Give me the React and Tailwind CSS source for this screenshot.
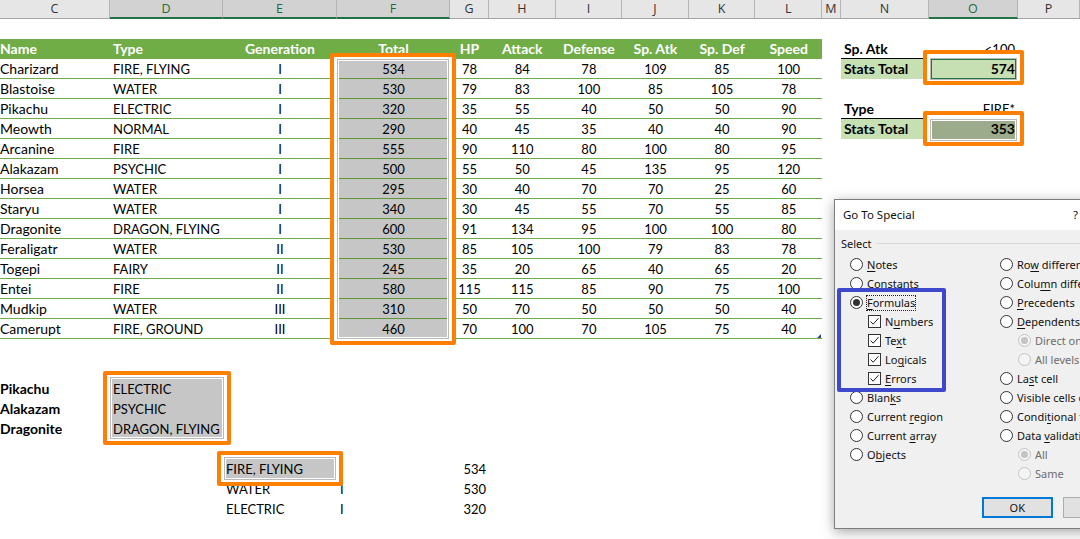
const grid = "grid grid-cols-[110px_113px_114px_113px_39px_repeat(5,66.6px)] whitespace-nowrap";

const pokemon = [
  ["Charizard", "FIRE, FLYING", "I", 534, 78, 84, 78, 109, 85, 100],
  ["Blastoise", "WATER", "I", 530, 79, 83, 100, 85, 105, 78],
  ["Pikachu", "ELECTRIC", "I", 320, 35, 55, 40, 50, 50, 90],
  ["Meowth", "NORMAL", "I", 290, 40, 45, 35, 40, 40, 90],
  ["Arcanine", "FIRE", "I", 555, 90, 110, 80, 100, 80, 95],
  ["Alakazam", "PSYCHIC", "I", 500, 55, 50, 45, 135, 95, 120],
  ["Horsea", "WATER", "I", 295, 30, 40, 70, 70, 25, 60],
  ["Staryu", "WATER", "I", 340, 30, 45, 55, 70, 55, 85],
  ["Dragonite", "DRAGON, FLYING", "I", 600, 91, 134, 95, 100, 100, 80],
  ["Feraligatr", "WATER", "II", 530, 85, 105, 100, 79, 83, 78],
  ["Togepi", "FAIRY", "II", 245, 35, 20, 65, 40, 65, 20],
  ["Entei", "FIRE", "II", 580, 115, 115, 85, 90, 75, 100],
  ["Mudkip", "WATER", "III", 310, 50, 70, 50, 50, 50, 40],
  ["Camerupt", "FIRE, GROUND", "III", 460, 70, 100, 70, 105, 75, 40],
];

const columns = [
  ["C", "w-[110px]"],
  ["D", "w-[113px]", true],
  ["E", "w-[114px]", true],
  ["F", "w-[113px]", true],
  ["G", "w-[39px]"],
  ["H", "w-[66.6px]"],
  ["I", "w-[66.6px]"],
  ["J", "w-[66.6px]"],
  ["K", "w-[66.6px]"],
  ["L", "w-[66.6px]"],
  ["M", "w-[19px]"],
  ["N", "w-[88px]"],
  ["O", "w-[89px]", true],
  ["P", "w-[62px]"],
];

const Callout = ({ className, pad = "border-x-[3px] border-y-[2px]", inner = "border-white" }) => (
  <div className={`absolute border-4 border-[#ff8000] rounded-[2px] ${className}`}>
    <div className={`h-full border-white ${pad}`}>
      <div className="h-full border border-[#b9b9b9]">
        <div className={`h-full border ${inner}`}></div>
      </div>
    </div>
  </div>
);

const Radio = ({ label, checked, disabled, focus, indent }) => (
  <div className={`flex items-center h-[19px] gap-1 whitespace-nowrap ${indent ? "pl-[18px]" : ""} ${disabled ? "text-[#6d6d6d]" : "text-[#111]"}`}>
    <span className={`flex items-center justify-center w-[13px] h-[13px] rounded-full border shrink-0 ${disabled ? "border-[#c4c4c4] bg-[#f4f4f4]" : "border-[#333] bg-white"}`}>
      {checked && <span className={`w-[7px] h-[7px] rounded-full ${disabled ? "bg-[#c4c4c4]" : "bg-[#333]"}`}></span>}
    </span>
    <span className={focus ? "outline-1 outline-dotted outline-[#222] leading-[14px]" : ""}>{label}</span>
  </div>
);

const Check = ({ label }) => (
  <div className="flex items-center h-[19px] gap-1 pl-[18px] text-[#111] whitespace-nowrap">
    <span className="flex items-center justify-center w-[13px] h-[13px] border border-[#333] bg-white shrink-0">
      <svg viewBox="0 0 11 11" className="w-[11px] h-[11px]">
        <path d="M1.5 5.5 L4.2 8.2 L9.5 2.2" fill="none" stroke="#222" strokeWidth="1" />
      </svg>
    </span>
    <span>{label}</span>
  </div>
);

const Key = ({ children }) => <span className="underline underline-offset-2">{children}</span>;

const GoToSpecial = () => (
  <div className="absolute left-[834px] top-[199px] w-[300px] h-[330px] border border-[#7d7d7d] bg-[#f0f0f0] shadow-[0_3px_12px_rgba(0,0,0,0.35)] font-['Noto_Sans',sans-serif] text-[11px] leading-[19px]">
    <div className="flex items-center justify-between h-[30px] bg-white pl-2 pr-[55px] pb-px text-[11.5px] text-[#111]">
      <span>Go To Special</span>
      <span>?</span>
    </div>
    <div className="flex items-center gap-1 h-[26px] pl-[6px] text-[#111]">
      <span>Select</span>
      <span className="flex-1 border-t border-[#d8d8d8]"></span>
    </div>
    <div className="flex pl-[15px] mt-[-1px]">
      <div className="w-[150px]">
        <Radio label={<><Key>N</Key>otes</>} />
        <Radio label={<>C<Key>o</Key>nstants</>} />
        <Radio checked focus label={<><Key>F</Key>ormulas</>} />
        <Check label={<>N<Key>u</Key>mbers</>} />
        <Check label={<>Te<Key>x</Key>t</>} />
        <Check label={<>Lo<Key>g</Key>icals</>} />
        <Check label={<><Key>E</Key>rrors</>} />
        <Radio label={<>Blan<Key>k</Key>s</>} />
        <Radio label={<>Current <Key>r</Key>egion</>} />
        <Radio label={<>Current <Key>a</Key>rray</>} />
        <Radio label={<>O<Key>b</Key>jects</>} />
      </div>
      <div>
        <Radio label={<>Ro<Key>w</Key> differences</>} />
        <Radio label={<>Colu<Key>m</Key>n differences</>} />
        <Radio label={<><Key>P</Key>recedents</>} />
        <Radio label={<><Key>D</Key>ependents</>} />
        <Radio indent checked disabled label="Direct only" />
        <Radio indent disabled label="All levels" />
        <Radio label={<>La<Key>s</Key>t cell</>} />
        <Radio label="Visible cells only" />
        <Radio label={<>Condi<Key>t</Key>ional formats</>} />
        <Radio label={<>Data <Key>v</Key>alidation</>} />
        <Radio indent checked disabled label="All" />
        <Radio indent disabled label="Same" />
      </div>
    </div>
    <div className="flex gap-[10px] pl-[147px] mt-[14px]">
      <div className="flex items-center justify-center w-[74px] h-[21px] bg-[#e1e1e1] border-2 border-[#0078d7] text-[#111]">OK</div>
      <div className="flex items-center justify-center w-[74px] h-[21px] bg-[#e1e1e1] border border-[#adadad] text-[#111]">Cancel</div>
    </div>
  </div>
);

const StatBlock = ({ label, value, total, fill }) => (
  <>
    <div className="flex h-5 border-b border-black text-[14px] leading-5">
      <span className="w-[88px] pl-[3px] font-bold">{label}</span>
      <span className="w-[89px] pr-[3px] text-right text-[13px]">{value}</span>
    </div>
    <div className="flex h-5 bg-[#c6e0b4] font-bold text-[14px] leading-5">
      <span className="w-[88px] pl-[3px]">Stats Total</span>
      <span className={`w-[89px] pr-[3px] text-right h-5 ${fill}`}>{total}</span>
    </div>
  </>
);

export default function App() {
  return (
    <div className="relative w-[1080px] h-[539px] overflow-hidden bg-white text-black font-['Lato',sans-serif] text-[13px] leading-[21px]">
      <div className="flex h-[19px] bg-[#e6e6e6] border-b border-[#a6a6a6] font-['Open_Sans',sans-serif] text-[12.5px] leading-[18px]">
        {columns.map(([name, width, active]) => (
          <div
            key={name}
            className={`${width} text-center border-r border-[#b5b5b5] shrink-0 ${active ? "h-[19px] bg-[#d2d2d2] border-b-2 border-b-[#217346] text-[#1d6a40]" : "text-[#333]"}`}
          >
            {name}
          </div>
        ))}
      </div>

      <div className="flex">
        <div className="w-[822px] pt-5">
          <div className={`${grid} h-5 bg-[#70ad47] text-white font-bold text-[14px] leading-5`}>
            <span>Name</span>
            <span className="pl-[3px]">Type</span>
            <span className="text-center">Generation</span>
            <span className="text-center">Total</span>
            <span className="text-center">HP</span>
            <span className="text-center">Attack</span>
            <span className="text-center">Defense</span>
            <span className="text-center">Sp. Atk</span>
            <span className="text-center">Sp. Def</span>
            <span className="text-center">Speed</span>
          </div>
          {pokemon.map(([name, type, gen, total, ...stats]) => (
            <div key={name} className={`${grid} h-5 border-b border-[#70ad47]`}>
              <span className="text-[14px] leading-5">{name}</span>
              <span className="pl-[3px]">{type}</span>
              <span className="text-center">{gen}</span>
              <span className="text-center bg-[#c6c6c6] h-5 border-b border-[#5f9437]">{total}</span>
              {stats.map((s, i) => (
                <span key={i} className="text-center">{s}</span>
              ))}
            </div>
          ))}

          <div className="mt-10 font-bold">
            {[["Pikachu", "ELECTRIC"], ["Alakazam", "PSYCHIC"], ["Dragonite", "DRAGON, FLYING"]].map(([name, type]) => (
              <div key={name} className={`${grid} h-5`}>
                <span className="text-[14px] leading-5">{name}</span>
                <span className="pl-[3px] font-normal bg-[#c6c6c6] h-5">{type}</span>
              </div>
            ))}
          </div>

          <div className="mt-5">
            {pokemon.slice(0, 3).map(([name, type, gen, total]) => (
              <div key={name} className={`${grid} h-5`}>
                <span></span>
                <span></span>
                <span className={`pl-[3px] h-5 ${name === "Charizard" ? "bg-[#c6c6c6]" : ""}`}>{type}</span>
                <span className="pl-[3px]">{gen}</span>
                <span className="pr-[3px] text-right">{total}</span>
              </div>
            ))}
          </div>
        </div>

        <div className="ml-[19px] w-[177px] pt-5">
          <StatBlock label="Sp. Atk" value="<100" total="574" fill="" />
          <div className="mt-5">
            <StatBlock label="Type" value="FIRE*" total="353" fill="bg-[#9bab8b]" />
          </div>
        </div>
      </div>

      <svg viewBox="0 0 4 4" className="absolute left-[817px] top-[334px] w-1 h-1">
        <path d="M4 0 V4 H0 Z" fill="#2b4a9c" />
      </svg>

      <Callout className="left-[330px] top-[53px] w-[126px] h-[292px]" />
      <Callout className="left-[103px] top-[371px] w-[128px] h-[74px]" />
      <Callout className="left-[217px] top-[451px] w-[126px] h-[35px]" />
      <Callout
        className="left-[923px] top-[50px] w-[101px] h-[35px]"
        pad="border-x-[3px] border-t-[4px] border-b-[1px]"
        inner="border-[#217346]"
      />
      <Callout
        className="left-[923px] top-[111px] w-[101px] h-[35px]"
        pad="border-x-[3px] border-t-[4px] border-b-[1px]"
      />

      <GoToSpecial />

      <div className="absolute left-[837px] top-[288px] w-[109px] h-[104px] border-4 border-[#3f48cc] rounded-[2px]"></div>
    </div>
  );
}
